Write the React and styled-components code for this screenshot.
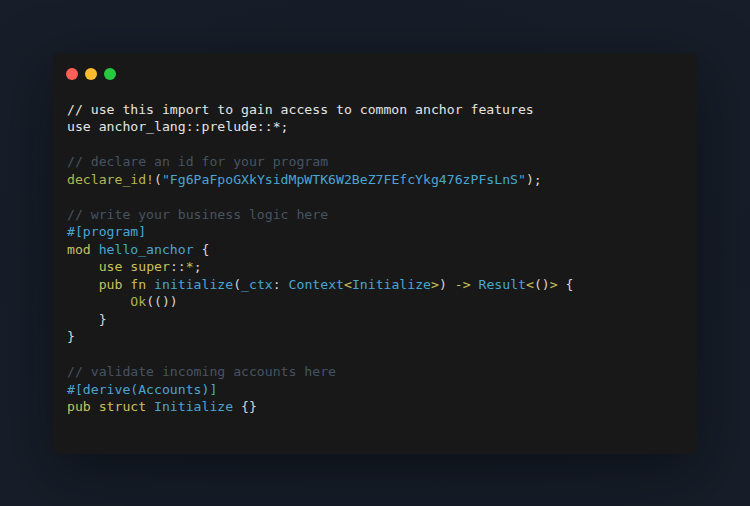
import React from "react";
import styled, { createGlobalStyle } from "styled-components";

const Global = createGlobalStyle`
  html, body { margin: 0; padding: 0; }
  body {
    background: #171e29;
    font-family: "DejaVu Sans Mono", "Liberation Mono", monospace;
  }
`;

const Page = styled.div`
  height: 506px;
  display: flex;
  align-items: center;
  justify-content: center;
  background: radial-gradient(ellipse at 50% 50%, #151b25 0%, #171e29 80%);
`;

const Window = styled.div`
  width: 644px;
  height: 401px;
  box-sizing: border-box;
  background: #181818;
  border-radius: 5px;
  box-shadow: 0 18px 60px rgba(5, 8, 12, 0.55);
  display: flex;
  flex-direction: column;
  padding: 15px 14px 0 13px;
`;

const Dots = styled.div`
  display: flex;
  gap: 7px;
`;

const Dot = styled.span`
  width: 12px;
  height: 12px;
  border-radius: 50%;
  background: ${(p) => p.$color};
`;

const Code = styled.pre`
  margin: 21px 0 0 1px;
  font-family: "DejaVu Sans Mono", "Liberation Mono", monospace;
  font-size: 13.15px;
  line-height: 17.5px;
  color: #d6d6d6;
  white-space: pre;
`;

const colors = {
  c: "#465462",
  w: "#e4e4e4",
  k: "#c9c15c",
  m: "#b3b84e",
  b: "#49a6d3",
  o: "#a9b24d",
};

const T = styled.span`
  color: ${(p) => colors[p.$k] || "#d6d6d6"};
`;

export default function App() {
  return (
    <>
      <Global />
      <Page>
        <Window>
          <Dots>
            <Dot $color="#ff5f57" />
            <Dot $color="#febc2e" />
            <Dot $color="#28c840" />
          </Dots>
          <Code>
            <T $k="w">// use this import to gain access to common anchor features</T>{"\n"}
            <T $k="w">use anchor_lang::prelude::*;</T>{"\n"}
            {"\n"}
            <T $k="c">// declare an id for your program</T>{"\n"}
            <T $k="m">declare_id!</T>(<T $k="b">"Fg6PaFpoGXkYsidMpWTK6W2BeZ7FEfcYkg476zPFsLnS"</T>);{"\n"}
            {"\n"}
            <T $k="c">// write your business logic here</T>{"\n"}
            <T $k="b">#[program]</T>{"\n"}
            <T $k="k">mod</T> <T $k="b">hello_anchor</T> {"{"}{"\n"}
            {"    "}<T $k="k">use</T> <T $k="k">super</T>::<T $k="k">*</T>;{"\n"}
            {"    "}<T $k="k">pub</T> <T $k="k">fn</T> <T $k="b">initialize</T>(<T $k="b">_ctx</T>: <T $k="b">Context</T><T $k="k">&lt;</T><T $k="b">Initialize</T><T $k="k">&gt;</T>) <T $k="k">-&gt;</T> <T $k="b">Result</T><T $k="k">&lt;</T>()<T $k="k">&gt;</T> {"{"}{"\n"}
            {"        "}<T $k="o">Ok</T>(()){"\n"}
            {"    }"}{"\n"}
            {"}"}{"\n"}
            {"\n"}
            <T $k="c">// validate incoming accounts here</T>{"\n"}
            <T $k="b">#[derive(Accounts)]</T>{"\n"}
            <T $k="k">pub</T> <T $k="k">struct</T> <T $k="b">Initialize</T> {"{}"}
          </Code>
        </Window>
      </Page>
    </>
  );
}
